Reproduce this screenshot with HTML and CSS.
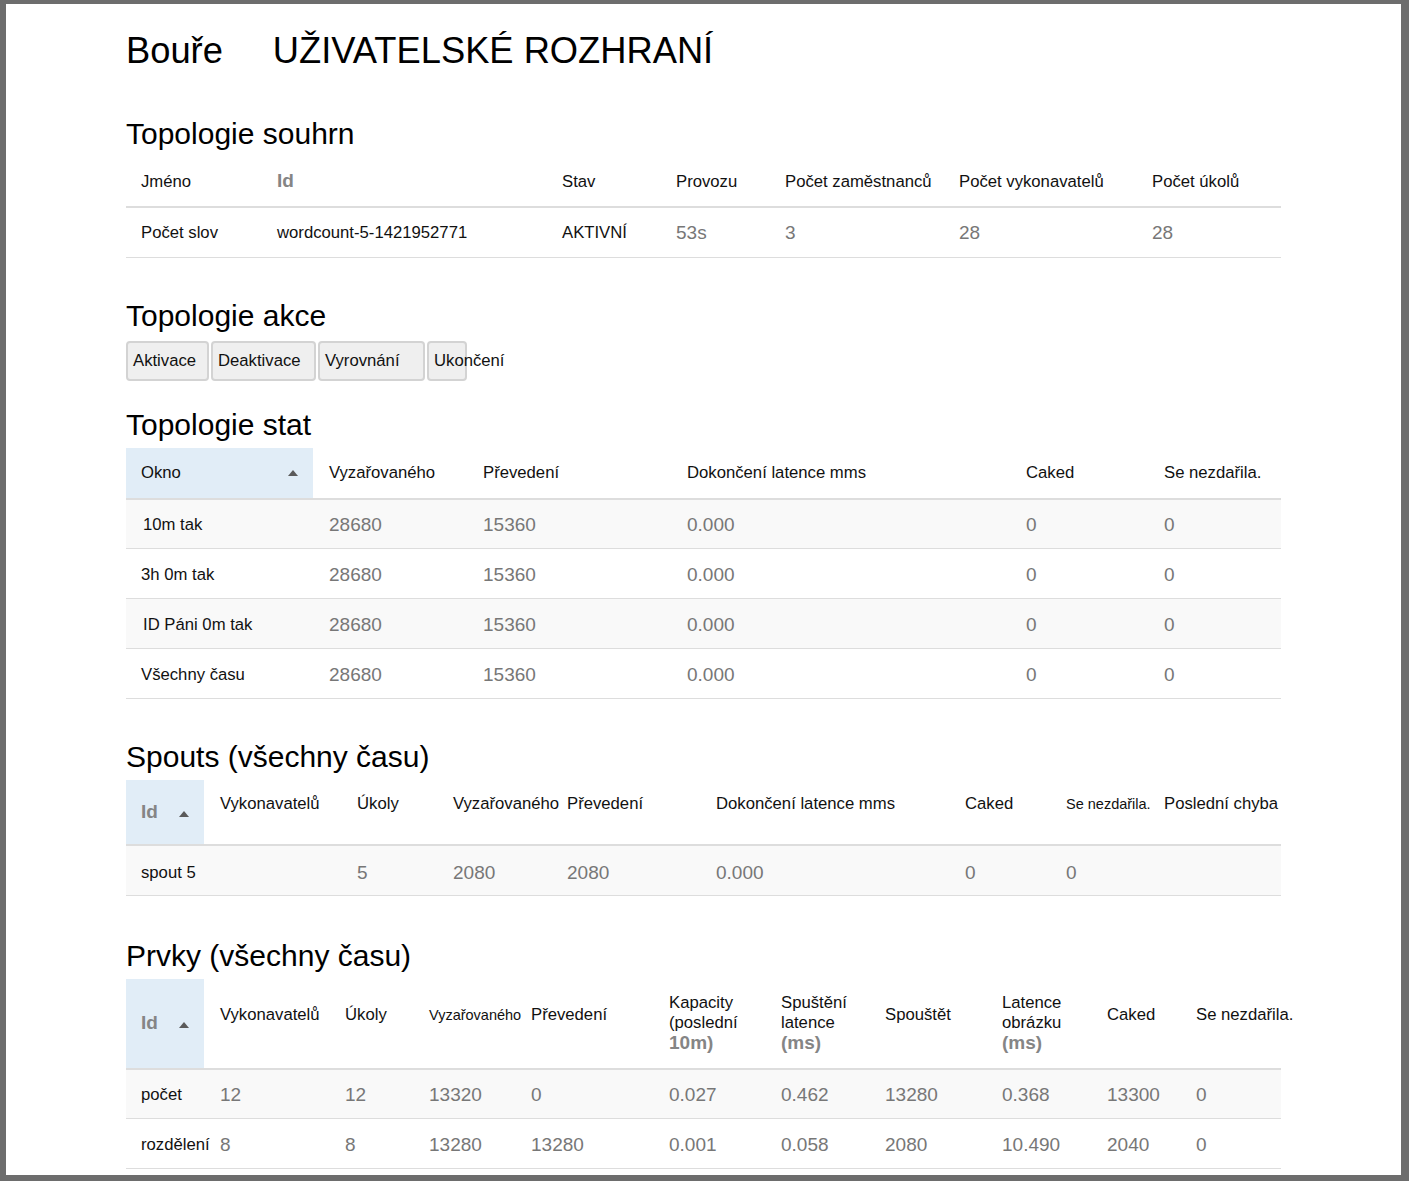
FILE: index.html
```html
<!DOCTYPE html>
<html lang="cs">
<head>
<meta charset="utf-8">
<title>Bouře UŽIVATELSKÉ ROZHRANÍ</title>
<link rel="stylesheet" href="styles.css">
</head>
<body>
<div class="page">
  <h1 class="title"><span>Bouře</span><span>UŽIVATELSKÉ ROZHRANÍ</span></h1>

  <h2 class="section-title first">Topologie souhrn</h2>
  <table class="grid summary">
    <colgroup>
      <col style="width:135px"><col style="width:285px"><col style="width:114px"><col style="width:109px"><col style="width:174px"><col style="width:193px"><col style="width:145px">
    </colgroup>
    <thead>
      <tr class="head-48">
        <th>Jméno</th><th><span class="gb">Id</span></th><th>Stav</th><th>Provozu</th><th>Počet zaměstnanců</th><th>Počet vykonavatelů</th><th>Počet úkolů</th>
      </tr>
    </thead>
    <tbody>
      <tr class="plain">
        <td>Počet slov</td><td>wordcount-5-1421952771</td><td>AKTIVNÍ</td><td class="num">53s</td><td class="num">3</td><td class="num">28</td><td class="num">28</td>
      </tr>
    </tbody>
  </table>

  <h2 class="section-title">Topologie akce</h2>
  <div class="actions">
    <button class="btn btn-a">Aktivace</button>
    <button class="btn btn-b">Deaktivace</button>
    <button class="btn btn-c">Vyrovnání</button>
    <button class="btn btn-d">Ukončení</button>
  </div>

  <h2 class="section-title after-buttons">Topologie stat</h2>
  <table class="grid stat">
    <colgroup>
      <col style="width:187px"><col style="width:154px"><col style="width:204px"><col style="width:339px"><col style="width:138px"><col style="width:133px">
    </colgroup>
    <thead>
      <tr class="head-49">
        <th class="sorted"><div class="sort-cell"><span>Okno</span><i class="arrow"></i></div></th>
        <th>Vyzařovaného</th><th>Převedení</th><th>Dokončení latence mms</th><th>Caked</th><th>Se nezdařila.</th>
      </tr>
    </thead>
    <tbody>
      <tr><td class="indent">10m tak</td><td class="num">28680</td><td class="num">15360</td><td class="num">0.000</td><td class="num">0</td><td class="num">0</td></tr>
      <tr><td>3h 0m tak</td><td class="num">28680</td><td class="num">15360</td><td class="num">0.000</td><td class="num">0</td><td class="num">0</td></tr>
      <tr><td class="indent">ID Páni 0m tak</td><td class="num">28680</td><td class="num">15360</td><td class="num">0.000</td><td class="num">0</td><td class="num">0</td></tr>
      <tr><td>Všechny času</td><td class="num">28680</td><td class="num">15360</td><td class="num">0.000</td><td class="num">0</td><td class="num">0</td></tr>
    </tbody>
  </table>

  <h2 class="section-title">Spouts (všechny času)</h2>
  <table class="grid spouts">
    <colgroup>
      <col style="width:78px"><col style="width:137px"><col style="width:96px"><col style="width:114px"><col style="width:149px"><col style="width:249px"><col style="width:101px"><col style="width:98px"><col style="width:133px">
    </colgroup>
    <thead>
      <tr class="head-63">
        <th class="sorted id-cell"><span class="gb">Id</span><i class="arrow arrow-inline"></i></th>
        <th class="lift">Vykonavatelů</th><th class="lift">Úkoly</th><th class="lift">Vyzařovaného</th><th class="lift">Převedení</th><th class="lift">Dokončení latence mms</th><th class="lift">Caked</th><th class="lift small">Se nezdařila.</th><th class="lift">Poslední chyba</th>
      </tr>
    </thead>
    <tbody>
      <tr class="low"><td>spout 5</td><td></td><td class="num">5</td><td class="num">2080</td><td class="num">2080</td><td class="num">0.000</td><td class="num">0</td><td class="num">0</td><td></td></tr>
    </tbody>
  </table>

  <h2 class="section-title bolts-title">Prvky (všechny času)</h2>
  <table class="grid bolts">
    <colgroup>
      <col style="width:78px"><col style="width:125px"><col style="width:84px"><col style="width:102px"><col style="width:138px"><col style="width:112px"><col style="width:104px"><col style="width:117px"><col style="width:105px"><col style="width:89px"><col style="width:101px">
    </colgroup>
    <thead>
      <tr class="head-88">
        <th class="sorted id-cell"><span class="gb">Id</span><i class="arrow arrow-inline"></i></th>
        <th class="lift">Vykonavatelů</th><th class="lift">Úkoly</th><th class="lift small">Vyzařovaného</th><th class="lift">Převedení</th>
        <th class="multi">Kapacity<br>(poslední<br><span class="gb">10m)</span></th>
        <th class="multi">Spuštění<br>latence<br><span class="gb">(ms)</span></th>
        <th class="lift">Spouštět</th>
        <th class="multi">Latence<br>obrázku<br><span class="gb">(ms)</span></th>
        <th class="lift">Caked</th><th class="lift">Se nezdařila.</th>
      </tr>
    </thead>
    <tbody>
      <tr><td>počet</td><td class="num">12</td><td class="num">12</td><td class="num">13320</td><td class="num">0</td><td class="num">0.027</td><td class="num">0.462</td><td class="num">13280</td><td class="num">0.368</td><td class="num">13300</td><td class="num">0</td></tr>
      <tr><td>rozdělení</td><td class="num">8</td><td class="num">8</td><td class="num">13280</td><td class="num">13280</td><td class="num">0.001</td><td class="num">0.058</td><td class="num">2080</td><td class="num">10.490</td><td class="num">2040</td><td class="num">0</td></tr>
    </tbody>
  </table>
</div>
</body>
</html>
```

FILE: styles.css
```css
html {
  background: #6d6d6d;
}

body {
  margin: 4px 8px 6px 6px;
  background: #ffffff;
  height: 1171px;
  overflow: hidden;
  font-family: "Liberation Sans", Arial, sans-serif;
  color: #111111;
}

.page {
  margin-left: 120px;
  width: 1155px;
  padding-top: 25px;
}

.title {
  display: flex;
  gap: 50px;
  margin: 0;
  font-size: 36.3px;
  line-height: 44px;
  font-weight: normal;
  color: #000;
}

.section-title {
  margin: 40px 0 5px;
  font-size: 30px;
  line-height: 36px;
  font-weight: normal;
  color: #000;
}

.section-title.first {
  margin-top: 43px;
}

.section-title.after-buttons {
  margin-top: 26px;
}

.section-title.bolts-title {
  margin-top: 42px;
}

/* buttons */
.actions {
  display: flex;
  gap: 2px;
  margin-top: 7px;
}

.btn {
  height: 40px;
  box-sizing: border-box;
  padding: 0 0 0 5px;
  border: 2px solid #d3d3d3;
  border-radius: 4px;
  background: #efefef;
  font-family: "Liberation Sans", Arial, sans-serif;
  font-size: 16.7px;
  color: #111;
  text-align: left;
  white-space: nowrap;
  overflow: visible;
}

.btn-a { width: 83px; }
.btn-b { width: 105px; }
.btn-c { width: 107px; }
.btn-d { width: 40px; }

/* tables */
.grid {
  width: 1155px;
  table-layout: fixed;
  border-collapse: collapse;
  border-spacing: 0;
  font-size: 16.7px;
}

.grid th,
.grid td {
  padding: 0 0 0 16px;
  text-align: left;
  white-space: nowrap;
  vertical-align: middle;
  font-weight: normal;
  overflow: visible;
}

.grid th:first-child,
.grid td:first-child {
  padding-left: 15px;
}

.grid td.indent {
  padding-left: 17px;
}

.grid thead th {
  border-bottom: 2px solid #dddddd;
  line-height: 20px;
}

.grid tbody tr {
  height: 50px;
}

.grid tbody td {
  border-bottom: 1px solid #dddddd;
  line-height: 20px;
  padding-top: 2px;
}

.grid tbody tr.low td {
  padding-top: 5px;
}

.grid tbody tr:nth-child(odd) td {
  background: #f9f9f9;
}

.grid tbody tr.plain td {
  background: #ffffff;
}

.head-48 { height: 50px; }
.head-49 { height: 51px; }
.head-63 { height: 65px; }
.head-88 { height: 90px; }

.grid th.lift {
  padding-bottom: 16px;
}

.grid th.small {
  font-size: 14.5px;
}

.grid th.multi {
  white-space: normal;
  line-height: 20px;
}

.grid th.sorted {
  background: #e1edf7;
}

.num {
  color: #777777;
  font-size: 19px;
}

.gb {
  color: #858585;
  font-weight: bold;
  font-size: 19px;
}

.sort-cell {
  display: flex;
  align-items: center;
  justify-content: space-between;
  padding-right: 15px;
}

.arrow {
  display: inline-block;
  width: 0;
  height: 0;
  border-left: 5px solid transparent;
  border-right: 5px solid transparent;
  border-bottom: 6px solid #5a5a5a;
}

.arrow-inline {
  margin-left: 21px;
  vertical-align: middle;
  position: relative;
  top: 1px;
}
```
